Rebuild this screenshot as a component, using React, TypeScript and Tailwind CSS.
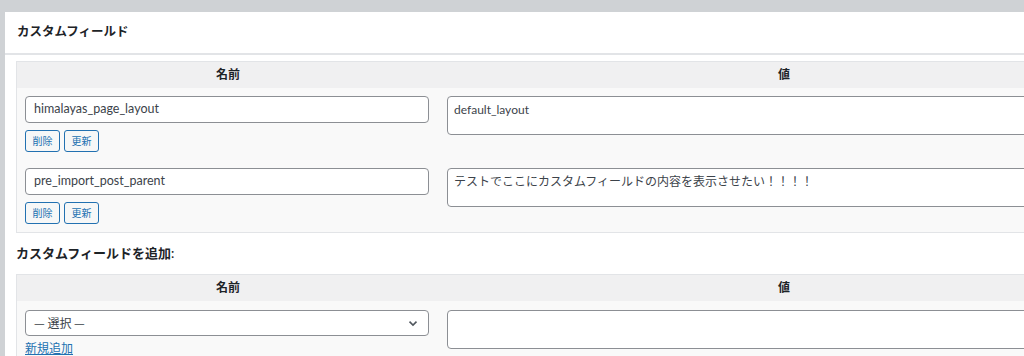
import React from 'react';

interface MetaRow {
  key: string;
  value: string;
}

const rows: MetaRow[] = [
  { key: 'himalayas_page_layout', value: 'default_layout' },
  { key: 'pre_import_post_parent', value: 'テストでここにカスタムフィールドの内容を表示させたい！！！！' },
];

const font = "font-['Lato','Noto_Sans_CJK_JP',sans-serif]";

const HeaderRow: React.FC = () => (
  <div className="grid grid-cols-[422px_690px] h-[26px] bg-[#f0f0f1] text-[12px] font-semibold text-[#1d2327]">
    <div className="flex items-center justify-center">名前</div>
    <div className="flex items-center justify-center">値</div>
  </div>
);

const SmallButton: React.FC<{ label: string }> = ({ label }) => (
  <button className="h-[22px] w-[35px] rounded-[3px] border border-[#2271b1] bg-[#f6f7f7] text-[10px] leading-none text-[#2271b1]">
    {label}
  </button>
);

const App: React.FC = () => {
  return (
    <div className={`h-[356px] w-[1024px] overflow-hidden bg-[#cfd2d5] pl-[5px] pt-[12px] ${font}`}>
      <div className="h-full w-[1100px] bg-white">
        <div className="flex h-[43px] items-center border-b-2 border-[#e2e4e7] pl-[12px] text-[12.5px] font-semibold text-[#1d2327]">
          カスタムフィールド
        </div>

        <div className="pl-[11px] pt-[6px]">
          <div className="w-[1112px] border border-[#e2e4e7] bg-[#f9f9f9]">
            <HeaderRow />
            {rows.map((row) => (
              <div key={row.key} className="grid grid-cols-[422px_690px] py-[8px]">
                <div className="px-[8px]">
                  <div className="flex h-[27px] w-[404px] items-center rounded-[4px] border border-[#8c8f94] bg-white px-[8px] text-[12.5px] text-[#3c434a]">
                    {row.key}
                  </div>
                  <div className="mt-[7px] flex gap-[4px]">
                    <SmallButton label="削除" />
                    <SmallButton label="更新" />
                  </div>
                </div>
                <div className="px-[8px]">
                  <div className="h-[39px] w-full rounded-[4px] border border-[#8c8f94] bg-white px-[6px] pt-[3px] text-[12px] leading-[20px] text-[#3c434a]">
                    {row.value}
                  </div>
                </div>
              </div>
            ))}
          </div>

          <div className="flex h-[41px] items-center text-[13px] font-semibold text-[#1d2327]">
            カスタムフィールドを追加:
          </div>

          <div className="w-[1112px] border border-[#e2e4e7] bg-[#f9f9f9]">
            <HeaderRow />
            <div className="grid grid-cols-[422px_690px] pt-[9px]">
              <div className="px-[8px]">
                <div className="flex h-[26px] w-[404px] items-center justify-between rounded-[4px] border border-[#8c8f94] bg-white pl-[8px] pr-[8px] text-[12px] text-[#3c434a]">
                  <span className="font-['Noto_Sans_CJK_JP',sans-serif]">— 選択 —</span>
                  <svg width="14" height="14" viewBox="0 0 20 20" fill="none" stroke="#50575e" strokeWidth="2.2">
                    <path d="M5 8l5 5 5-5" />
                  </svg>
                </div>
                <a className="mt-[5px] block text-[12px] leading-[16px] text-[#2271b1] underline">新規追加</a>
              </div>
              <div className="px-[8px]">
                <div className="h-[39px] w-full rounded-[4px] border border-[#8c8f94] bg-white" />
              </div>
            </div>
          </div>
        </div>
      </div>
    </div>
  );
};

export default App;
